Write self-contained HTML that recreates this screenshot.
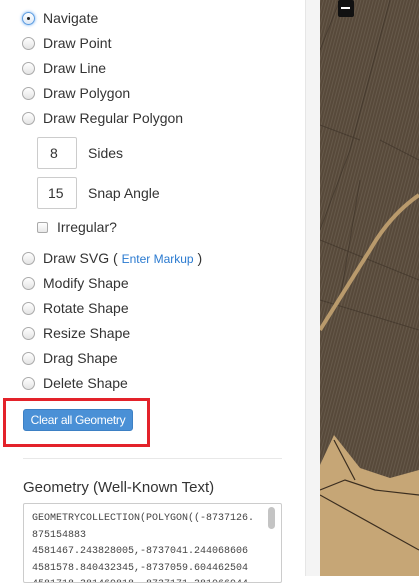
<!DOCTYPE html>
<html><head><style>
*{box-sizing:border-box}
body{margin:0;width:419px;height:576px;overflow:hidden;font-family:"Liberation Sans",Helvetica,sans-serif;color:#333;background:#fff;position:relative}
.r{position:absolute;left:22px;font-size:14px;height:20px;line-height:20px}
.r .c{position:absolute;left:0;top:4px;width:13px;height:13px;border-radius:50%;border:1px solid #aaa;background:linear-gradient(#fff,#e4e4e4)}
.r span.t{position:absolute;left:21px;white-space:nowrap}
.box{position:absolute;left:37px;width:40px;height:32px;border:1px solid #ccc;border-radius:2px;font-size:14px;line-height:30px;padding-left:12px}
.lbl{position:absolute;left:88px;font-size:14px}
</style></head><body>
<div class="r" style="top:8px"><div class="c" style="border-color:#5a9be0;box-shadow:0 0 3px #6aaaf0;background:linear-gradient(#fff,#dde8f5)"><div style="position:absolute;left:4px;top:4px;width:3px;height:3px;border-radius:50%;background:#222"></div></div><span class="t">Navigate</span></div>
<div class="r" style="top:33px"><div class="c"></div><span class="t">Draw Point</span></div>
<div class="r" style="top:58px"><div class="c"></div><span class="t">Draw Line</span></div>
<div class="r" style="top:83px"><div class="c"></div><span class="t">Draw Polygon</span></div>
<div class="r" style="top:108px"><div class="c"></div><span class="t">Draw Regular Polygon</span></div>
<div class="box" style="top:137px">8</div><div class="lbl" style="top:145px">Sides</div>
<div class="box" style="top:177px;padding-left:10px">15</div><div class="lbl" style="top:185px">Snap Angle</div>
<div style="position:absolute;left:37px;top:222px;width:11px;height:11px;border:1px solid #aaa;border-radius:2px;background:linear-gradient(#fff,#e8e8e8)"></div>
<div style="position:absolute;left:57px;top:219px;font-size:14px">Irregular?</div>
<div class="r" style="top:248px"><div class="c"></div><span class="t">Draw SVG ( <span style="color:#2a7ad0;font-size:12px">Enter Markup</span> )</span></div>
<div class="r" style="top:273px"><div class="c"></div><span class="t">Modify Shape</span></div>
<div class="r" style="top:298px"><div class="c"></div><span class="t">Rotate Shape</span></div>
<div class="r" style="top:323px"><div class="c"></div><span class="t">Resize Shape</span></div>
<div class="r" style="top:348px"><div class="c"></div><span class="t">Drag Shape</span></div>
<div class="r" style="top:373px"><div class="c"></div><span class="t">Delete Shape</span></div>
<div style="position:absolute;left:3px;top:398px;width:147px;height:49px;border:3px solid #e3222a"></div>
<div style="position:absolute;left:23px;top:409px;width:110px;height:22px;background:#4a90d6;border:1px solid #3d80c4;border-radius:3px;color:#fff;font-size:12px;line-height:20px;text-align:center;letter-spacing:-0.3px">Clear all Geometry</div>
<div style="position:absolute;left:23px;top:458px;width:259px;height:1px;background:#e8e8e8"></div>
<div style="position:absolute;left:23px;top:479px;font-size:15px;color:#333">Geometry (Well-Known Text)</div>
<div style="position:absolute;left:23px;top:503px;width:259px;height:80px;border:1px solid #ccc;border-radius:2px;font-family:'Liberation Mono',monospace;font-size:10px;line-height:16.5px;padding:7px 0 0 8px;color:#444;overflow:hidden;white-space:pre">GEOMETRYCOLLECTION(POLYGON((-8737126.
875154883
4581467.243828005,-8737041.244068606
4581578.840432345,-8737059.604462504
4581718.381469818,-8737171.381066944</div>
<div style="position:absolute;left:268px;top:507px;width:7px;height:22px;border-radius:4px;background:#c4c4c4"></div>
<div style="position:absolute;left:305px;top:0;width:15px;height:576px;background:#f4f4f4;border-left:1px solid #e6e6e6"></div>
<svg style="position:absolute;left:320px;top:0" width="99" height="576" viewBox="0 0 99 576">
<defs><pattern id="p" width="3" height="6" patternUnits="userSpaceOnUse" patternTransform="rotate(15)"><rect width="3" height="6" fill="#57493a"/><rect width="1" height="6" fill="#66594a"/></pattern></defs>
<rect width="99" height="576" fill="url(#p)"/>
<path d="M0 125 L40 140 M20 0 L0 50 M70 0 L30 150 L0 230 M0 300 L99 330 M60 140 L99 160 M0 240 L99 280 M40 180 L20 300" stroke="#3a3126" stroke-width="1" fill="none" opacity=".6"/>
<path d="M99 195 Q70 215 50 250 L0 330" stroke="#b99a6c" stroke-width="4" fill="none"/>
<path d="M0 465 L14 435 L40 468 L70 478 L99 470 L99 576 L0 576 Z" fill="#c6a676"/>
<path d="M0 490 L25 480 L55 490 L99 495 M14 440 L35 480 M0 495 L99 550" stroke="#3b2e20" stroke-width="1.2" fill="none"/>
<rect x="18" y="0" width="16" height="17" rx="2" fill="#111"/>
<rect x="21" y="7" width="9" height="2" fill="#fff"/>
</svg>
</body></html>
